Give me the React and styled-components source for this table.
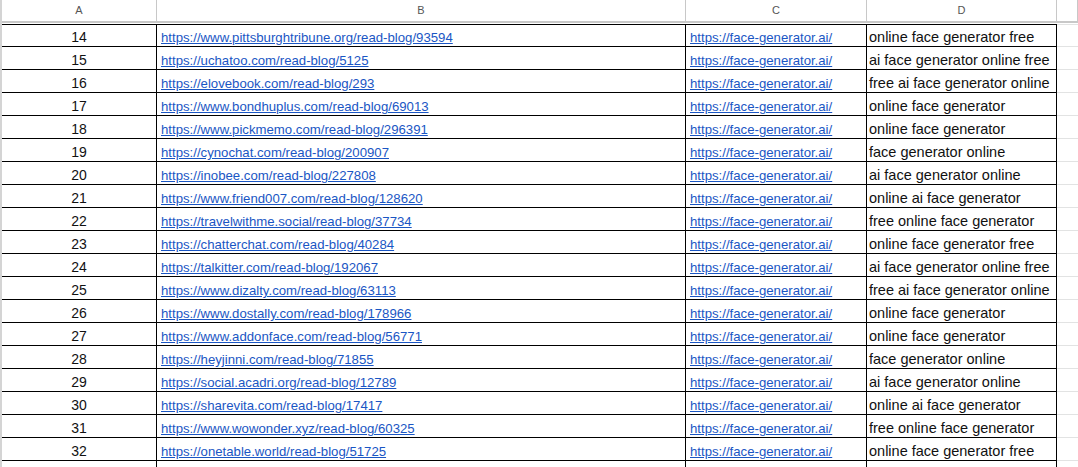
import React from 'react';
import styled, { createGlobalStyle } from 'styled-components';

const rows = [
  [14, 'https://www.pittsburghtribune.org/read-blog/93594', 'online face generator free'],
  [15, 'https://uchatoo.com/read-blog/5125', 'ai face generator online free'],
  [16, 'https://elovebook.com/read-blog/293', 'free ai face generator online'],
  [17, 'https://www.bondhuplus.com/read-blog/69013', 'online face generator'],
  [18, 'https://www.pickmemo.com/read-blog/296391', 'online face generator'],
  [19, 'https://cynochat.com/read-blog/200907', 'face generator online'],
  [20, 'https://inobee.com/read-blog/227808', 'ai face generator online'],
  [21, 'https://www.friend007.com/read-blog/128620', 'online ai face generator'],
  [22, 'https://travelwithme.social/read-blog/37734', 'free online face generator'],
  [23, 'https://chatterchat.com/read-blog/40284', 'online face generator free'],
  [24, 'https://talkitter.com/read-blog/192067', 'ai face generator online free'],
  [25, 'https://www.dizalty.com/read-blog/63113', 'free ai face generator online'],
  [26, 'https://www.dostally.com/read-blog/178966', 'online face generator'],
  [27, 'https://www.addonface.com/read-blog/56771', 'online face generator'],
  [28, 'https://heyjinni.com/read-blog/71855', 'face generator online'],
  [29, 'https://social.acadri.org/read-blog/12789', 'ai face generator online'],
  [30, 'https://sharevita.com/read-blog/17417', 'online ai face generator'],
  [31, 'https://www.wowonder.xyz/read-blog/60325', 'free online face generator'],
  [32, 'https://onetable.world/read-blog/51725', 'online face generator free'],
];

const target = 'https://face-generator.ai/';

const GlobalStyle = createGlobalStyle`
  html, body {
    margin: 0;
    padding: 0;
    background: #fff;
  }
  body {
    font-family: "Liberation Sans", Arial, sans-serif;
    overflow: hidden;
  }
`;

const COLS = '155px 529px 181px 190px 1fr';

const Sheet = styled.div`
  width: 1078px;
  height: 467px;
  overflow: hidden;
  border-left: 2px solid #d4d4d4;
  box-sizing: border-box;
  background: #fff;
`;

const HeaderRow = styled.div`
  display: grid;
  grid-template-columns: ${COLS};
  height: 24px;
  box-sizing: border-box;
  border-bottom: 1px solid #fff;
`;

const HeaderCell = styled.div`
  display: flex;
  align-items: center;
  justify-content: center;
  border-right: 1px solid #c8c8c8;
  border-bottom: 2px solid #c8c8c8;
  box-sizing: border-box;
  font-size: 11px;
  color: #555;
  padding-bottom: 2px;
`;

const Body = styled.div`
  display: flex;
  flex-direction: column;
`;

const Row = styled.div`
  display: grid;
  grid-template-columns: ${COLS};
  height: 23px;
  box-sizing: border-box;
`;

const Cell = styled.div`
  display: flex;
  align-items: flex-end;
  justify-content: ${(p) => (p.$center ? 'center' : 'flex-start')};
  box-sizing: border-box;
  border-top: ${(p) => (p.$first ? '1px solid #000' : 'none')};
  border-bottom: 1px solid #000;
  border-right: 1px solid #000;
  padding: 0 0 1px ${(p) => p.$pad || '4px'};
  white-space: nowrap;
  overflow: hidden;
  font-size: ${(p) => p.$size || '13.2px'};
  color: #111;
`;

const Blank = styled.div`
  box-sizing: border-box;
  border-top: ${(p) => (p.$first ? '1px solid #e2e3e3' : 'none')};
  border-bottom: 1px solid #e2e3e3;
`;

const Link = styled.a`
  color: #1a56c4;
  text-decoration: underline;
  text-underline-offset: 1px;
`;

function App() {
  return (
    <>
      <GlobalStyle />
      <Sheet>
        <HeaderRow>
          {['A', 'B', 'C', 'D', ''].map((l, i) => (
            <HeaderCell key={i}>{l}</HeaderCell>
          ))}
        </HeaderRow>
        <Body>
          {rows.map(([n, url, kw], i) => (
            <Row key={n}>
              <Cell $center $pad="0" $first={i === 0} $size="14px">{n}</Cell>
              <Cell $first={i === 0}><Link href={url}>{url}</Link></Cell>
              <Cell $first={i === 0}><Link href={target}>{target}</Link></Cell>
              <Cell $first={i === 0} $pad="2px" $size="14.5px">{kw}</Cell>
              <Blank $first={i === 0} />
            </Row>
          ))}
          <Row>
            <Cell $center $pad="0" />
            <Cell />
            <Cell />
            <Cell />
            <Blank />
          </Row>
        </Body>
      </Sheet>
    </>
  );
}

export default App;
